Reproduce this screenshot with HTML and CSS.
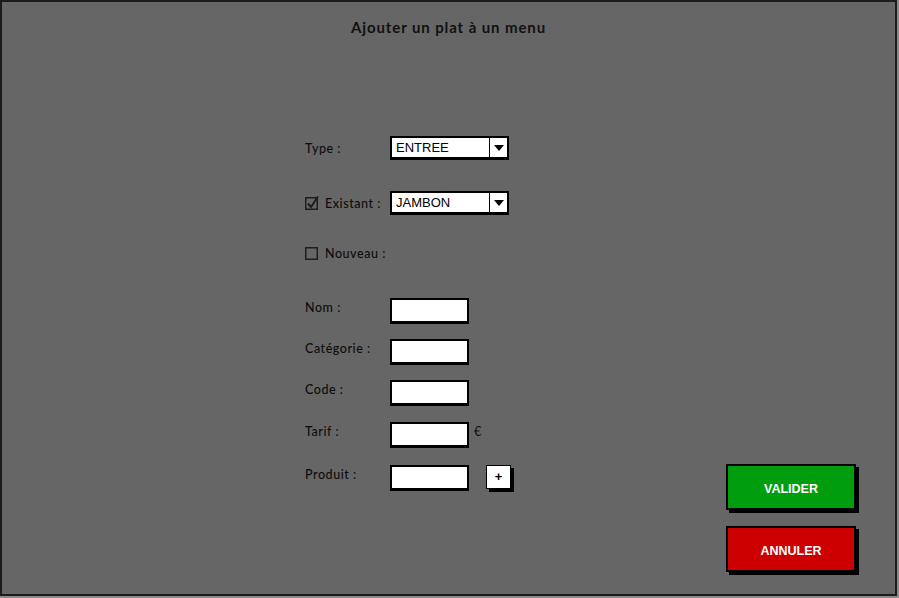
FILE: index.html
```html
<!DOCTYPE html>
<html lang="fr">
<head>
<meta charset="utf-8">
<title>Ajouter un plat à un menu</title>
<link rel="stylesheet" href="styles.css">
</head>
<body>
<div class="frame">
  <h1 class="title">Ajouter un plat à un menu</h1>
  <div class="content">
    <div class="form">
      <div class="row row-type">
        <span class="label">Type :</span>
        <div class="select"><span class="select-text">ENTREE</span><span class="select-btn"><svg width="10" height="6" viewBox="0 0 10 6"><path d="M0 0 L10 0 L5 6 Z" fill="#000"/></svg></span></div>
      </div>
      <div class="row row-existant">
        <span class="label"><svg class="cb" width="14" height="14" viewBox="0 0 14 14"><rect x="0.75" y="1.75" width="11.5" height="11.5" fill="none" stroke="#1e1e1e" stroke-width="1.5"/><path d="M3 7.5 L6 11 L13 0.5" fill="none" stroke="#1e1e1e" stroke-width="2"/></svg>Existant :</span>
        <div class="select"><span class="select-text">JAMBON</span><span class="select-btn"><svg width="10" height="6" viewBox="0 0 10 6"><path d="M0 0 L10 0 L5 6 Z" fill="#000"/></svg></span></div>
      </div>
      <div class="row row-nouveau">
        <span class="label"><svg class="cb" width="14" height="14" viewBox="0 0 14 14"><rect x="0.75" y="1.75" width="11.5" height="11.5" fill="none" stroke="#1e1e1e" stroke-width="1.5"/></svg>Nouveau :</span>
      </div>
      <div class="row row-field row-nom">
        <span class="label">Nom :</span>
        <div class="input"></div>
      </div>
      <div class="row row-field row-cat">
        <span class="label">Catégorie :</span>
        <div class="input"></div>
      </div>
      <div class="row row-field row-code">
        <span class="label">Code :</span>
        <div class="input"></div>
      </div>
      <div class="row row-field row-tarif">
        <span class="label">Tarif :</span>
        <div class="input"></div>
        <span class="unit">€</span>
      </div>
      <div class="row row-field row-produit">
        <span class="label">Produit :</span>
        <div class="input"></div>
        <div class="plus">+</div>
      </div>
    </div>
    <div class="actions">
      <div class="btn btn-ok">VALIDER</div>
      <div class="btn btn-cancel">ANNULER</div>
    </div>
  </div>
</div>
</body>
</html>
```
FILE: styles.css
```css
html, body {
  margin: 0;
  padding: 0;
  background: #8a8a8a;
}
.frame {
  box-sizing: border-box;
  width: 897px;
  height: 596px;
  border: 2px solid #1c1c1c;
  background: #666666;
  font-family: Lato, "Open Sans", sans-serif;
  color: #0d0d0d;
}
.title {
  margin: 0;
  padding-top: 15px;
  height: 20px;
  line-height: 20px;
  text-align: center;
  font-size: 15px;
  font-weight: bold;
  letter-spacing: 0.9px;
  color: #111;
}
.content {
  display: flex;
  align-items: flex-start;
  margin-top: 99px;
}
.form {
  margin-left: 303px;
  display: flex;
  flex-direction: column;
}
.row {
  display: flex;
  align-items: center;
  height: 24px;
}
.label {
  width: 85px;
  display: flex;
  align-items: center;
  font-size: 12.5px;
  font-weight: 500;
  letter-spacing: 0.55px;
  white-space: nowrap;
}
.cb {
  margin-right: 6px;
  flex: none;
}
.row-existant { margin-top: 31px; }
.row-nouveau { margin-top: 26px; }
.row-field {
  align-items: flex-start;
  height: 26px;
}
.row-field .label {
  line-height: 17px;
  padding-top: 1px;
}
.row-nom { margin-top: 33px; }
.row-cat { margin-top: 15px; }
.row-code { margin-top: 15px; }
.row-tarif { margin-top: 16px; }
.row-produit { margin-top: 17px; }
.select {
  box-sizing: border-box;
  width: 119px;
  height: 24px;
  border: 2px solid #000;
  border-bottom-width: 3px;
  background: #fff;
  display: flex;
}
.select-text {
  flex: 1;
  padding-left: 4px;
  font-family: "Liberation Sans", Arial, sans-serif;
  font-size: 13px;
  line-height: 19px;
  color: #000;
}
.select-btn {
  width: 17px;
  border-left: 1.5px solid #000;
  display: flex;
  align-items: center;
  justify-content: center;
}
.input {
  box-sizing: border-box;
  width: 79px;
  height: 26px;
  border: 2px solid #000;
  border-bottom-width: 3px;
  border-right-width: 2.5px;
  background: #fff;
}
.unit {
  margin-left: 5px;
  font-size: 12.5px;
  line-height: 20px;
}
.plus {
  box-sizing: border-box;
  margin-left: 17px;
  width: 25px;
  height: 24px;
  border: 1.5px solid #000;
  background: #fff;
  box-shadow: 3px 3px 0 #000;
  font-family: "Liberation Sans", Arial, sans-serif;
  font-weight: bold;
  font-size: 13px;
  line-height: 21px;
  text-align: center;
  color: #000;
}
.actions {
  margin-left: auto;
  margin-right: 39px;
  margin-top: 328px;
  display: flex;
  flex-direction: column;
  gap: 16px;
}
.btn {
  box-sizing: border-box;
  width: 130px;
  height: 46px;
  border: 2px solid #000;
  box-shadow: 3px 3px 0 #000;
  color: #fff;
  font-family: "Liberation Sans", Arial, sans-serif;
  font-weight: bold;
  font-size: 12.5px;
  line-height: 42px;
  padding-top: 2px;
  text-align: center;
}
.btn-ok { background: #009e0f; }
.btn-cancel { background: #cc0000; }
```
